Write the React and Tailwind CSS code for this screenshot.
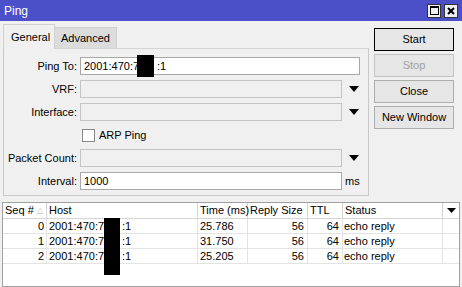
import React from 'react';

const cols = [
  { key: 'seq', title: 'Seq #', w: 'w-[44px]', align: 'justify-end pr-[2px]' },
  { key: 'host', title: 'Host', w: 'w-[151px]', align: 'pl-[2px]' },
  { key: 'time', title: 'Time (ms)', w: 'w-[50px]', align: 'pl-[2px]' },
  { key: 'size', title: 'Reply Size', w: 'w-[60px]', align: 'justify-end pr-[3px]' },
  { key: 'ttl', title: 'TTL', w: 'w-[35px]', align: 'justify-end pr-[3px]' },
  { key: 'status', title: 'Status', w: 'w-[100px]', align: 'pl-[1px]' },
];

const rows = [
  { seq: '0', time: '25.786', size: '56', ttl: '64', status: 'echo reply' },
  { seq: '1', time: '31.750', size: '56', ttl: '64', status: 'echo reply' },
  { seq: '2', time: '25.205', size: '56', ttl: '64', status: 'echo reply' },
];

function Arrow() {
  return (
    <svg width="10" height="6" viewBox="0 0 10 6" className="ml-[7px]">
      <path d="M0 0H10L5 6Z" fill="#000" />
    </svg>
  );
}

function Field({ label, children }) {
  return (
    <div className="flex items-center h-[18px]">
      <div className="w-[73px] text-right mr-[3px] whitespace-nowrap">{label}</div>
      {children}
    </div>
  );
}

function Btn({ children, focus, disabled }) {
  return (
    <div
      className={
        'h-[23px] flex items-center justify-center bg-[#e6e6e6] border ' +
        (focus ? 'border-black' : disabled ? 'border-[#c4c4c4] text-[#a0a0a0]' : 'border-[#adadad]')
      }
    >
      {children}
    </div>
  );
}

export default function App() {
  return (
    <div className="w-[462px] h-[287px] overflow-hidden bg-[#f0f0f0] flex flex-col font-['Liberation_Sans',Arial,sans-serif] text-[11px] text-black leading-none">
      {/* title bar */}
      <div className="h-[21px] shrink-0 bg-[#4b50c9] flex items-center pl-[4px] pr-[4px] text-white text-[12px]">
        <span>Ping</span>
        <div className="ml-auto flex gap-[3px]">
          <div className="w-[14px] h-[14px] bg-[#f0f0f0] border border-[#333] flex items-center justify-center">
            <div className="w-[9px] h-[9px] border border-black border-t-2" />
          </div>
          <div className="w-[14px] h-[14px] bg-[#f0f0f0] border border-[#333] flex items-center justify-center">
            <svg width="8" height="8" viewBox="0 0 8 8">
              <path d="M1 1L7 7M7 1L1 7" stroke="#000" strokeWidth="2" />
            </svg>
          </div>
        </div>
      </div>

      {/* body */}
      <div className="flex pt-[3px] shrink-0">
        <div className="ml-[3px] w-[366px] flex flex-col">
          <div className="flex items-end h-[24px]">
            <div className="h-[25px] w-[52px] -mb-px bg-[#f0f0f0] border border-b-0 border-[#d0d0d0] flex items-center pl-[7px] relative z-10">
              General
            </div>
            <div className="h-[21px] w-[62px] bg-[#dcdcdc] border border-l-0 border-b-0 border-[#cfcfcf] flex items-center pl-[6px]">
              Advanced
            </div>
          </div>
          <div className="h-[148px] border border-[#c8c8c8] border-t-[#d4d4d4] pt-[8px] flex flex-col gap-[5px]">
            <Field label="Ping To:">
              <div className="relative w-[280px] h-[18px] bg-white border border-[#a8a8a8] flex items-center pl-[3px]">
                <span>2001:470:7</span>
                <span className="ml-[18px]">:1</span>
                <div className="absolute left-[56px] top-[-3px] w-[17px] h-[22px] bg-black" />
              </div>
            </Field>
            <Field label="VRF:">
              <div className="w-[262px] h-[18px] border border-[#c4c4c4]" />
              <Arrow />
            </Field>
            <Field label="Interface:">
              <div className="w-[262px] h-[18px] border border-[#c4c4c4]" />
              <Arrow />
            </Field>
            <Field label="">
              <div className="ml-[2px] w-[13px] h-[13px] bg-white border border-[#888]" />
              <span className="ml-[4px]">ARP Ping</span>
            </Field>
            <Field label="Packet Count:">
              <div className="w-[262px] h-[18px] border border-[#c4c4c4]" />
              <Arrow />
            </Field>
            <Field label="Interval:">
              <div className="w-[262px] h-[18px] bg-white border border-[#a8a8a8] flex items-center pl-[3px]">1000</div>
              <span className="ml-[3px]">ms</span>
            </Field>
          </div>
        </div>

        <div className="ml-[5px] pt-[4px] w-[80px] flex flex-col gap-[3px]">
          <Btn focus>Start</Btn>
          <Btn disabled>Stop</Btn>
          <Btn>Close</Btn>
          <Btn>New Window</Btn>
        </div>
      </div>

      {/* table */}
      <div className="relative mt-[6px] mx-[2px] flex-1 bg-white border border-[#a0a0a0]">
        <div className="flex h-[16px] border-b border-[#d5d5d5]">
          {cols.map((c) => (
            <div key={c.key} className={c.w + ' border-r border-[#d5d5d5] flex items-center pl-[2px] whitespace-nowrap'}>
              {c.title}
              {c.key === 'seq' && <span className="ml-[3px] text-[8px] text-[#c0c0c0]">△</span>}
            </div>
          ))}
          <div className="flex-1 flex items-center justify-center">
            <svg width="9" height="5" viewBox="0 0 9 5">
              <path d="M0 0H9L4.5 5Z" fill="#000" />
            </svg>
          </div>
        </div>
        {rows.map((r) => (
          <div key={r.seq} className="flex h-[15px] border-b border-[#e3e3e3]">
            {cols.map((c) => (
              <div key={c.key} className={c.w + ' ' + c.align + ' border-r border-[#e3e3e3] flex items-center whitespace-nowrap'}>
                {c.key === 'host' ? (
                  <>
                    <span>2001:470:7</span>
                    <span className="ml-[18px]">:1</span>
                  </>
                ) : (
                  r[c.key]
                )}
              </div>
            ))}
            <div className="flex-1" />
          </div>
        ))}
        <div className="absolute left-[101px] top-[15px] w-[16px] h-[57px] bg-black" />
      </div>
    </div>
  );
}
